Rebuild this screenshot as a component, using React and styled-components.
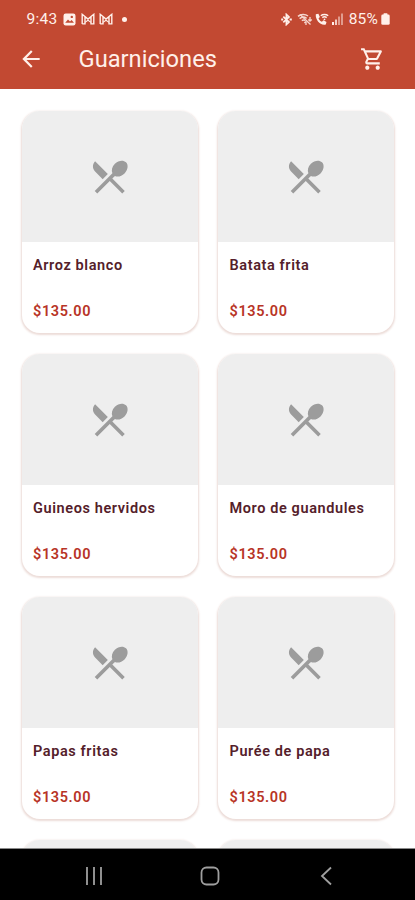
import React from 'react';
import styled, { createGlobalStyle } from 'styled-components';

const GlobalStyle = createGlobalStyle`
  * {
    box-sizing: border-box;
  }

  body {
    margin: 0;
    background: #ffffff;
    font-family: Roboto, 'Liberation Sans', sans-serif;
  }
`;

const Screen = styled.div`
  display: flex;
  flex-direction: column;
  width: 415px;
  height: 900px;
  overflow: hidden;
  background: #ffffff;
`;

const Header = styled.header`
  flex: none;
  height: 89px;
  background: #c24932;
  color: #fff0ea;
`;

const StatusBar = styled.div`
  display: flex;
  align-items: center;
  justify-content: space-between;
  height: 38px;
  padding: 0 25px 0 26.5px;
`;

const StatusGroup = styled.div`
  display: flex;
  align-items: center;
  gap: ${({ gap }) => gap || '5px'};

  svg {
    display: block;
    flex: none;
  }
`;

const StatusText = styled.span`
  margin-left: ${({ inset }) => inset || '0'};
  font-size: 15.5px;
  line-height: 18px;
  letter-spacing: ${({ spacing }) => spacing || '0'};
`;

const Dot = styled.span`
  width: 5px;
  height: 5px;
  margin-left: 4px;
  border-radius: 50%;
  background: currentColor;
`;

const AppBar = styled.div`
  display: flex;
  align-items: center;
  height: 42px;
  padding: 0 30.5px 0 17.5px;

  svg {
    display: block;
    fill: currentColor;
  }
`;

const Title = styled.h1`
  flex: 1;
  margin: 0 0 0 35px;
  font-size: 23.7px;
  font-weight: 400;
  line-height: 28px;
`;

const Grid = styled.main`
  flex: 1;
  min-height: 0;
  display: grid;
  grid-template-columns: repeat(2, 176px);
  grid-auto-rows: 222px;
  gap: 21px 20.5px;
  padding: 22px 0 0 21.5px;
  overflow: hidden;
`;

const Card = styled.article`
  overflow: hidden;
  border-radius: 18px;
  background: #ffffff;
  box-shadow: 0 1px 2px 0.5px rgba(160, 80, 60, 0.2);
`;

const Thumb = styled.div`
  display: flex;
  align-items: center;
  justify-content: center;
  height: 131px;
  background: #eeeeee;

  svg {
    fill: #9c9c9c;
  }
`;

const Info = styled.div`
  display: flex;
  flex-direction: column;
  gap: 28px;
  padding: 14.5px 11.5px 0;
`;

const Line = styled.span`
  font-size: 14.5px;
  font-weight: 600;
  line-height: 18px;
  letter-spacing: 0.6px;
  white-space: nowrap;
  color: ${({ $price }) => ($price ? '#b83426' : '#54202a')};
`;

const NavBar = styled.nav`
  flex: none;
  display: flex;
  justify-content: space-between;
  align-items: center;
  height: 52px;
  padding: 2px 79px 0 84px;
  border-top: 1px solid #8a8a8a;
  background: #000000;

  svg {
    display: block;
    fill: none;
    stroke: #9f9f9f;
    stroke-width: 1.8;
  }
`;

const PictureIcon = () => (
  <svg width="13" height="13" viewBox="0 0 13 13">
    <rect x="0.5" y="0.5" width="12" height="12" rx="2.2" fill="currentColor" />
    <path d="M2.2 9.8 5 6.4l2 2.1L8.6 7l2.4 2.8z" fill="#c24932" />
    <circle cx="8.8" cy="3.9" r="1.2" fill="#c24932" />
  </svg>
);

const MailIcon = () => (
  <svg width="14" height="12" viewBox="0 0 14 12" fill="none" stroke="currentColor">
    <path d="M1.2 10.9V1.3L7 6l5.8-4.7v9.6H10V4M1.2 10.9H4V4" strokeWidth="1.4" />
    <path d="M4 9.4 7 7.2l3 2.2" strokeWidth="1.1" />
  </svg>
);

const BluetoothIcon = () => (
  <svg width="11" height="13" viewBox="0 0 11 13" fill="none" stroke="currentColor">
    <path d="M2.3 3.6 8 9.1l-2.6 2.4v-10L8 3.9 2.3 9.4" strokeWidth="1.7" />
    <path d="M.2 6.5h2M8.6 6.5h2.2" strokeWidth="2" />
  </svg>
);

const WifiOffIcon = () => (
  <svg width="16" height="13" viewBox="0 0 16 13" fill="none" stroke="currentColor" opacity="0.85">
    <path d="M1 3.4C3.7 1 8.3.8 11 3M2.6 5.6c2-1.6 5-1.7 7-.2M4.8 7.6c1-.7 2.2-.7 3.2 0" strokeWidth="1.5" />
    <path d="M3 1.5 13.5 11.5" strokeWidth="1.3" />
    <path d="M13 4v4M11.3 6.5 13 8.2l1.8-1.7M9 12V8.6M7.4 10 9 8.4" strokeWidth="1.3" />
  </svg>
);

const WifiCallIcon = () => (
  <svg width="14" height="13" viewBox="0 0 14 13" fill="none" stroke="currentColor">
    <path
      d="M.8 1.3 3.4.8l1.5 3.2-1.4 1.5c.8 1.6 1.8 2.6 3.4 3.2l1.6-1.4 3 1.6-.7 2.6C5.6 13 .2 7.2.8 1.3z"
      fill="currentColor"
      stroke="none"
    />
    <path d="M5.8 2.7c2-1.7 5.4-1.7 7.4 0M7.3 4.7c1.2-1 3.2-1 4.4 0" strokeWidth="1.5" />
    <circle cx="9.5" cy="6.3" r="0.9" fill="currentColor" stroke="none" />
  </svg>
);

const SignalIcon = () => (
  <svg width="11" height="12" viewBox="0 0 11 12" fill="currentColor">
    <rect x="0" y="9" width="2" height="3" />
    <rect x="3" y="6.5" width="2" height="5.5" opacity="0.8" />
    <rect x="6" y="3.5" width="2" height="8.5" opacity="0.5" />
    <rect x="9" y="0.5" width="2" height="11.5" opacity="0.5" />
  </svg>
);

const BatteryIcon = () => (
  <svg width="9" height="12" viewBox="0 0 9 12" fill="currentColor">
    <rect x="2.5" y="0.3" width="4" height="2" rx="0.6" />
    <rect x="0.3" y="1.6" width="8.4" height="10.2" rx="1.4" />
  </svg>
);

const BackIcon = () => (
  <svg width="26" height="26" viewBox="0 0 24 24">
    <path d="M20 11H7.83l5.59-5.59L12 4l-8 8 8 8 1.41-1.41L7.83 13H20v-2z" />
  </svg>
);

const CartIcon = () => (
  <svg width="25" height="26" viewBox="0 0 24 24" preserveAspectRatio="none">
    <path d="M15.55 13c.75 0 1.41-.41 1.75-1.03l3.58-6.49A.996.996 0 0 0 20.01 4H5.21l-.94-2H1v2h2l3.6 7.59-1.35 2.44C4.52 15.37 5.48 17 7 17h12v-2H7l1.1-2h7.45zM6.16 6h12.15l-2.76 5H8.53L6.16 6zM7 18c-1.1 0-1.99.9-1.99 2S5.9 22 7 22s2-.9 2-2-.9-2-2-2zm10 0c-1.1 0-1.99.9-1.99 2s.89 2 1.99 2 2-.9 2-2-.9-2-2-2z" />
  </svg>
);

const DishIcon = () => (
  <svg width="43.5" height="43.5" viewBox="0 0 24 24">
    <path d="M8.1 13.34l2.83-2.83L3.91 3.5c-1.56 1.56-1.56 4.09 0 5.66l4.19 4.18zm6.78-1.81c1.53.71 3.68.21 5.27-1.38 1.91-1.91 2.28-4.65.81-6.12-1.46-1.46-4.2-1.1-6.12.81-1.59 1.59-2.09 3.74-1.38 5.27L3.7 19.87l1.41 1.41L12 14.41l6.88 6.88 1.41-1.41L13.41 13l1.47-1.47z" />
  </svg>
);

const dishes = [
  'Arroz blanco',
  'Batata frita',
  'Guineos hervidos',
  'Moro de guandules',
  'Papas fritas',
  'Purée de papa',
  '',
  '',
];

const DishCard = ({ name }) => (
  <Card>
    <Thumb>{name && <DishIcon />}</Thumb>
    {name && (
      <Info>
        <Line>{name}</Line>
        <Line $price>$135.00</Line>
      </Info>
    )}
  </Card>
);

export default function App() {
  return (
    <Screen>
      <GlobalStyle />
      <Header>
        <StatusBar>
          <StatusGroup>
            <StatusText spacing="0.3px">9:43</StatusText>
            <PictureIcon />
            <StatusGroup gap="4px">
              <MailIcon />
              <MailIcon />
            </StatusGroup>
            <Dot />
          </StatusGroup>
          <StatusGroup gap="3px">
            <StatusGroup>
              <BluetoothIcon />
              <StatusGroup gap="2px">
                <WifiOffIcon />
                <WifiCallIcon />
              </StatusGroup>
            </StatusGroup>
            <SignalIcon />
            <StatusText inset="3px" spacing="0.2px">
              85%
            </StatusText>
            <BatteryIcon />
          </StatusGroup>
        </StatusBar>
        <AppBar>
          <BackIcon />
          <Title>Guarniciones</Title>
          <CartIcon />
        </AppBar>
      </Header>
      <Grid>
        {dishes.map((name, i) => (
          <DishCard key={i} name={name} />
        ))}
      </Grid>
      <NavBar>
        <svg width="20" height="20" viewBox="0 0 20 20">
          <path d="M3 1v18M10 1v18M17 1v18" />
        </svg>
        <svg width="20" height="20" viewBox="0 0 20 20">
          <rect x="1.5" y="1.5" width="17" height="17" rx="5" />
        </svg>
        <svg width="20" height="20" viewBox="0 0 20 20">
          <path d="M15 1.5 6 10l9 8.5" />
        </svg>
      </NavBar>
    </Screen>
  );
}
